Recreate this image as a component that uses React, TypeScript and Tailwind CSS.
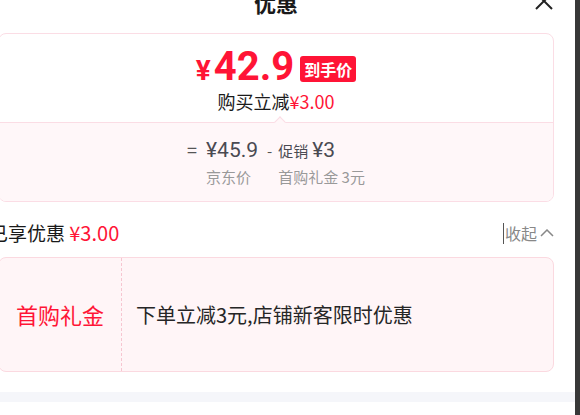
import React from "react";

const Close = () => (
  <svg width="18" height="18" viewBox="0 0 18 18" className="-mt-[8px] mr-[1px] justify-self-end">
    <path d="M1 1L17 17M17 1L1 17" stroke="#222" strokeWidth="2" />
  </svg>
);

export default function App() {
  return (
    <div className="flex h-[415px] w-[580px] overflow-hidden bg-white font-['Noto_Sans_CJK_SC',sans-serif] text-[#1a1a1a]">
      <div className="flex w-[575px] flex-col">
        <div className="ml-[-2px] w-[556px]">
          {/* header */}
          <div className="grid h-[33px] grid-cols-[1fr_auto_1fr] items-start">
            <div />
            <h1 className="-mt-[13px] text-[22px] font-bold leading-[30px] text-[#1a1a1a]">优惠</h1>
            <Close />
          </div>

          {/* price card */}
          <div className="overflow-hidden rounded-[8px] border border-[#fbdde5]">
            <div className="flex flex-col items-center pb-[9px] pt-[15px]">
              <div className="flex h-[40px] items-center gap-[6px]">
                <div className="flex items-baseline font-['Roboto',sans-serif] font-bold text-[#ff1436]">
                  <span className="mr-[3px] text-[28px] leading-[40px]">¥</span>
                  <span className="text-[40px] leading-[40px]">42.9</span>
                </div>
                <span className="rounded-[3px] bg-[#ff1436] px-[4px] text-[16px] font-bold leading-[26px] text-white">
                  到手价
                </span>
              </div>
              <div className="text-[18px] leading-[24px]">
                购买立减<span className="text-[#ff1436]">¥3.00</span>
              </div>
            </div>

            <div className="relative border-t border-[#fbdde5] bg-[#fff7f9] pb-[14px] pt-[13px]">
              <span className="absolute left-[277px] top-[-5px] h-[8px] w-[8px] rotate-45 border-l border-t border-[#fbdde5] bg-[#fff7f9]" />
              <div className="flex justify-center">
                <div className="grid grid-cols-[auto_auto_auto_auto] items-baseline gap-y-[3px]">
                  <span className="mr-[9px] text-[18px] text-[#555]">=</span>
                  <span className="font-['Roboto',sans-serif] text-[21px] leading-[28px] text-[#4a4a52]">¥45.9</span>
                  <span className="ml-[9px] mr-[6px] text-[15px] text-[#555]">-</span>
                  <span className="text-[15px] text-[#4a4a52]">
                    促销
                    <span className="ml-[4px] font-['Roboto',sans-serif] text-[21px] leading-[28px]">¥3</span>
                  </span>
                  <span />
                  <span className="text-[15px] leading-[20px] text-[#999]">京东价</span>
                  <span />
                  <span className="text-[15px] leading-[20px] text-[#999]">首购礼金 3元</span>
                </div>
              </div>
            </div>
          </div>

          {/* summary row */}
          <div className="flex items-center justify-between pb-[12px] pt-[19px]">
            <div className="-ml-[9px] text-[19px] leading-[24px]">
              已享优惠 <span className="text-[20px] text-[#ff1436]">¥3.00</span>
            </div>
            <div className="flex items-center text-[16px] leading-[24px] text-[#888]">
              <span className="mr-[1px] h-[21px] w-px bg-[#555]" />
              收起
              <svg width="14" height="8" viewBox="0 0 14 8" className="ml-[3px]">
                <path d="M1 7L7 1L13 7" fill="none" stroke="#888" strokeWidth="1.5" />
              </svg>
            </div>
          </div>

          {/* coupon card */}
          <div className="flex h-[115px] rounded-[8px] border border-[#fbd9e0] bg-[#fff5f7]">
            <div className="flex w-[123px] items-center justify-center border-r border-dashed border-[#f7c6d1] text-[22px] text-[#ff1436]">
              首购礼金
            </div>
            <div className="flex items-center pl-[14px] text-[20px] text-[#262626]">
              下单立减3元,店铺新客限时优惠
            </div>
          </div>
        </div>

        <div className="mt-[20px] h-[10px] bg-[#f5f6fa]" />
      </div>
      <div className="w-[5px] bg-[#383838]" />
    </div>
  );
}
